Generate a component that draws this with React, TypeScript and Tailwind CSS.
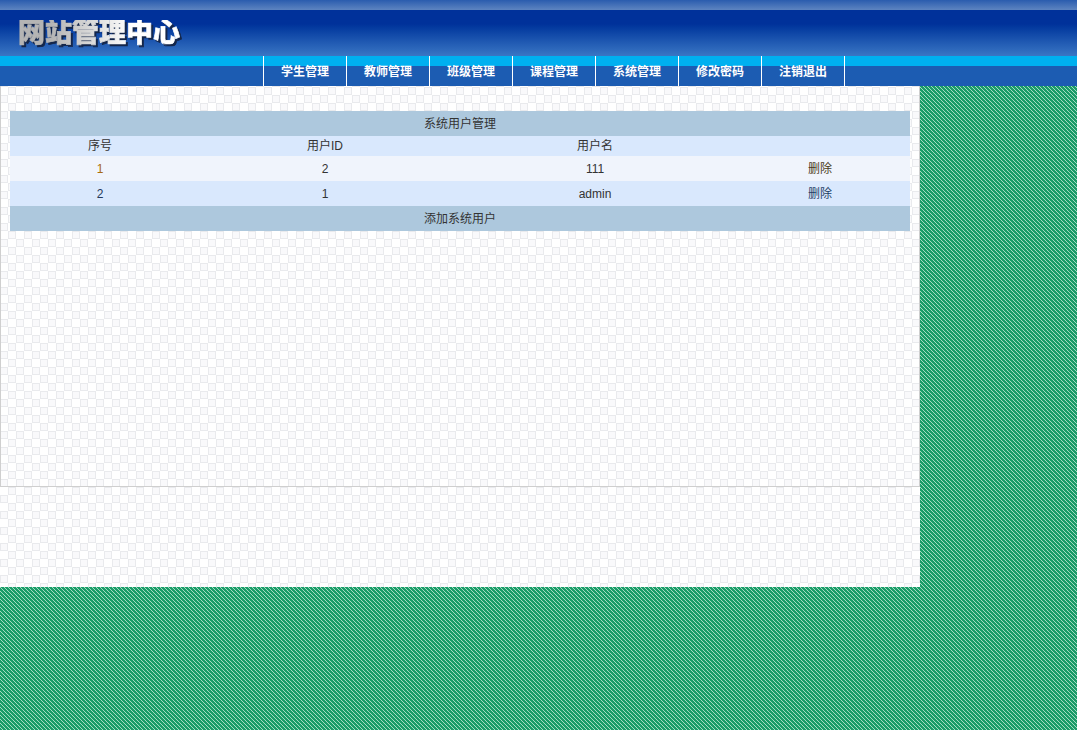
const navItems = ['学生管理', '教师管理', '班级管理', '课程管理', '系统管理', '修改密码', '注销退出'];

const users = [
  { no: 1, id: 2, name: '111', rowBg: 'bg-[#f0f4fc]', noColor: 'text-[#a86a10]', delColor: 'text-[#4a3a20]' },
  { no: 2, id: 1, name: 'admin', rowBg: 'bg-[#d9e8fd]', noColor: 'text-[#24385a]', delColor: 'text-[#1f3f66]' },
];

// 8px outlined squares staggered on a 16px tile
const checker =
  'bg-white bg-[conic-gradient(at_6px_6px,transparent_75%,#f9f9fb_0),conic-gradient(at_8px_8px,transparent_75%,#e9eaed_0),conic-gradient(at_6px_6px,transparent_75%,#f9f9fb_0),conic-gradient(at_8px_8px,transparent_75%,#e9eaed_0)] bg-[length:16px_16px] bg-[position:9px_2px,8px_1px,1px_10px,0px_9px]';

const stripes =
  'bg-[#1a9c68] bg-[linear-gradient(45deg,#a3dcc2_12.5%,#1a9c68_12.5%,#1a9c68_50%,#a3dcc2_50%,#a3dcc2_62.5%,#1a9c68_62.5%)] bg-[length:4px_4px]';

export default function App() {
  return (
    <div className={`min-h-[730px] w-[1077px] overflow-hidden font-['Liberation_Sans','Noto_Sans_CJK_SC',sans-serif] text-xs text-[#333] ${stripes}`}>
      <header>
        <div className="h-[10px] bg-gradient-to-b from-[#2a5cae] to-[#5d84c0]" />
        <div className="flex h-[46px] items-center bg-gradient-to-b from-[#00319a] from-30% to-[#3a76c4] pl-[18px]">
          <span className="bg-gradient-to-r from-[#b4b4b4] from-20% to-white to-70% bg-clip-text text-[27px] leading-none font-black text-transparent [-webkit-text-stroke:0.7px_transparent] [filter:drop-shadow(2px_2px_0_#14264a)]">
            网站管理中心
          </span>
        </div>
        <div className="h-[30px] bg-[linear-gradient(#00b0f0_10px,#1c5cb2_10px)]">
          <nav className="flex h-full pl-[263px]">
            {navItems.map((item, i) => (
              <a
                key={item}
                className={`flex items-center justify-center border-l border-white pt-[2px] text-xs font-bold text-white ${i === navItems.length - 1 ? 'w-[84px] border-r' : 'w-[83px]'}`}
              >
                {item}
              </a>
            ))}
          </nav>
        </div>
      </header>

      <main className={`h-[501px] w-[920px] ${checker}`}>
        <div className="h-[401px] border-r border-b border-l border-[#cfcfcf] px-[9px] pt-[25px]">
          <table className="w-[900px] table-fixed border-collapse text-center text-xs">
            <colgroup>
              <col className="w-[180px]" />
              <col className="w-[270px]" />
              <col className="w-[270px]" />
              <col className="w-[180px]" />
            </colgroup>
            <tbody>
              <tr className="h-[25px] bg-[#adc8dd]">
                <td colSpan={4}>系统用户管理</td>
              </tr>
              <tr className="h-[20px] bg-[#d9e8fd]">
                <td>序号</td>
                <td>用户ID</td>
                <td>用户名</td>
                <td />
              </tr>
              {users.map((u) => (
                <tr key={u.no} className={`h-[25px] ${u.rowBg}`}>
                  <td className={u.noColor}>{u.no}</td>
                  <td>{u.id}</td>
                  <td>{u.name}</td>
                  <td className={u.delColor}>删除</td>
                </tr>
              ))}
              <tr className="h-[25px] bg-[#adc8dd]">
                <td colSpan={4}>添加系统用户</td>
              </tr>
            </tbody>
          </table>
        </div>
      </main>
    </div>
  );
}
